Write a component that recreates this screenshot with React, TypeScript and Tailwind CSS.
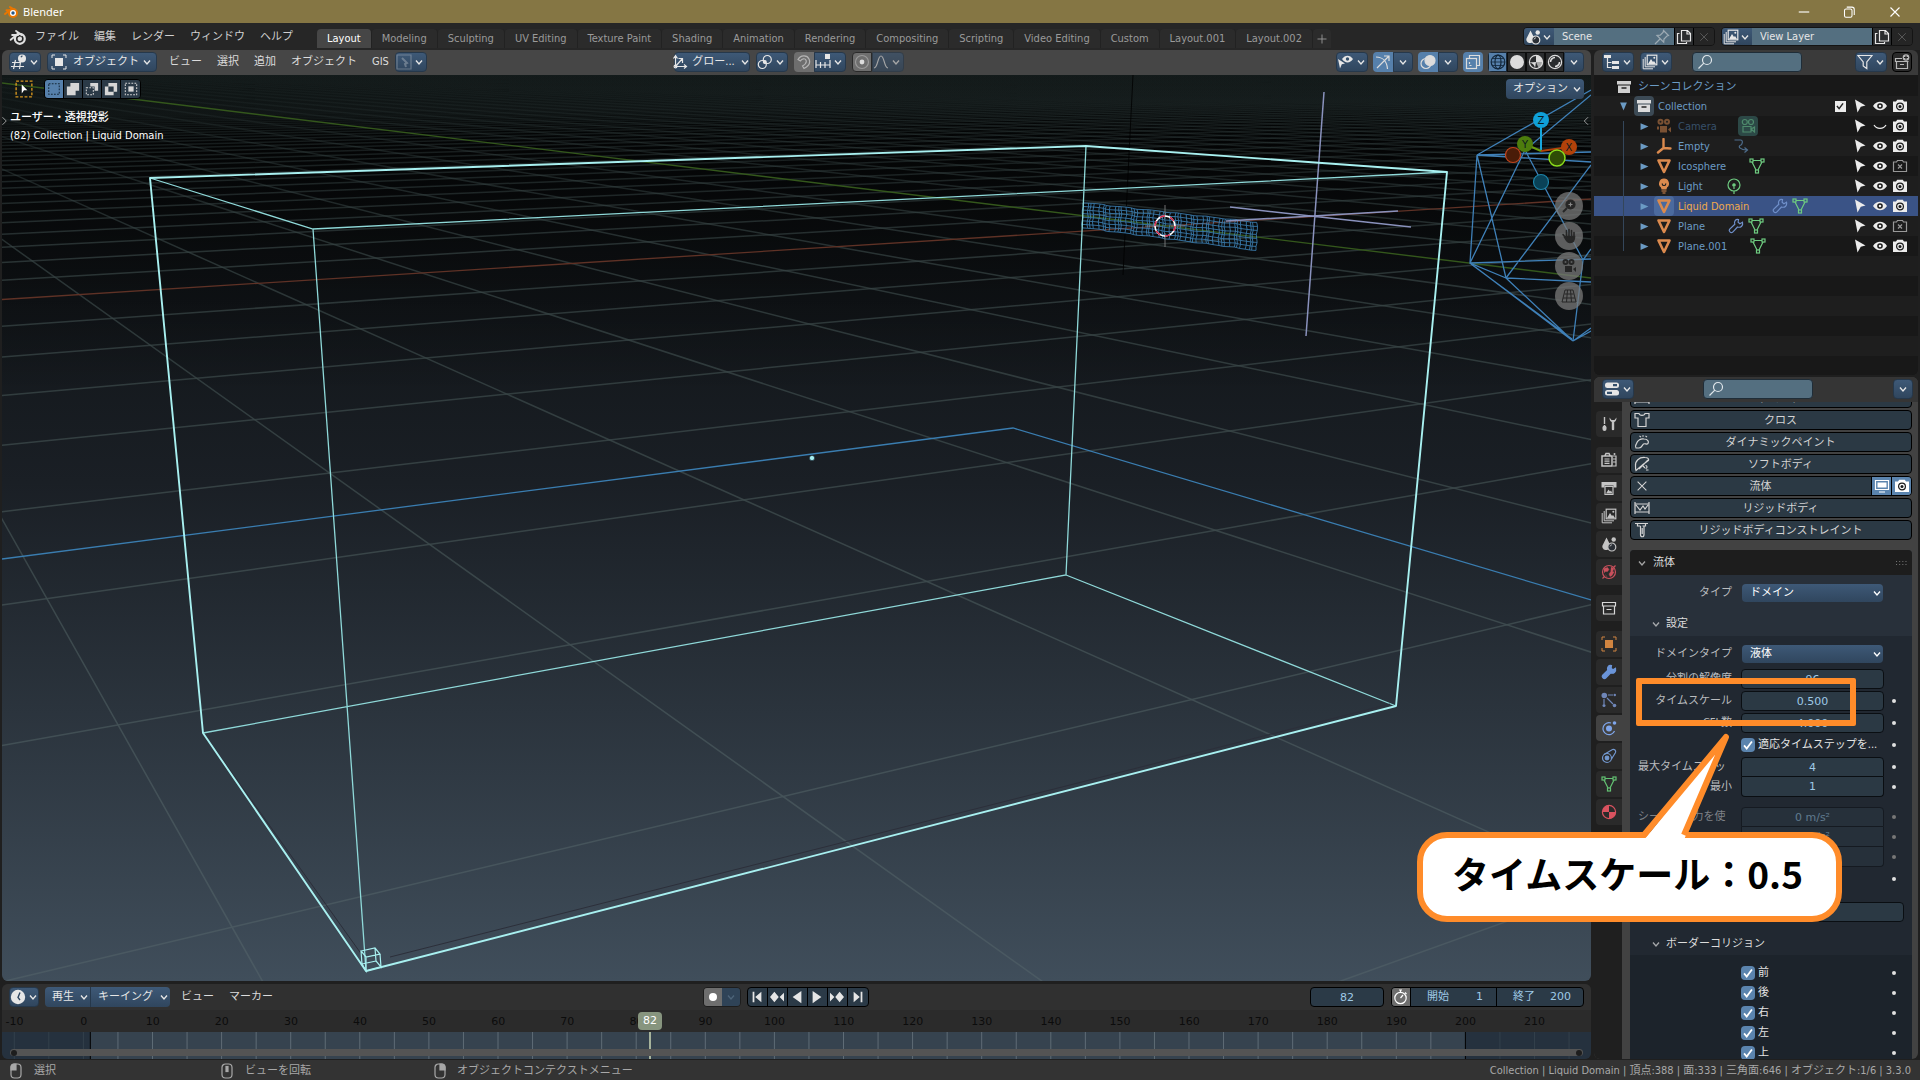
import type { ReactNode } from "react";
import clsx from "clsx";

/* ---------- icons ---------- */

type IconProps = { children: ReactNode; className?: string };

function Icon({ children, className }: IconProps) {
  return (
    <svg
      viewBox="0 0 16 16"
      fill="none"
      stroke="currentColor"
      strokeWidth="1.2"
      className={clsx("shrink-0", className ?? "size-4")}
      aria-hidden="true"
    >
      {children}
    </svg>
  );
}

const Chevron = ({ className }: { className?: string }) => (
  <Icon className={className ?? "size-3"}>
    <path d="M4 6l4 4.5L12 6" strokeWidth="1.8" />
  </Icon>
);

const BlenderLogo = ({ className }: { className?: string }) => (
  <Icon className={className}>
    <path d="M1.5 10.5L8.5 4.6M2.8 6.2H8M6.3 2.6l5.2 3.8" strokeWidth="1.7" strokeLinecap="round" />
    <circle cx="9.6" cy="9.6" r="4.4" strokeWidth="2" />
    <circle cx="9.6" cy="9.6" r="1.4" fill="currentColor" />
  </Icon>
);

const Viewport3DIcon = () => (
  <Icon>
    <path d="M1 8.5h8M0 12.5h13M4.5 6L2.5 15M9.5 8L8.5 15" />
    <circle cx="11" cy="4.6" r="4" fill="currentColor" stroke="none" />
    <path d="M10 3.2a1.5 1.5 0 011.5-1" stroke="#35506c" />
  </Icon>
);

const ObjectModeIcon = () => (
  <Icon>
    <path d="M1 4V1h3M12 1h3v3M15 12v3h-3M4 15H1v-3" strokeWidth="1" />
    <rect x="4" y="4" width="8" height="8" fill="currentColor" stroke="none" />
  </Icon>
);

const AxesIcon = () => (
  <Icon>
    <path d="M3.5 2v10.5H14M3.5 12.5L10 5M1.5 4.5l2-3 2 3M12 10.5l2.5 2-2.5 2M6.5 4.5H10.5V9" />
    <circle cx="3.5" cy="12.5" r="1.4" />
  </Icon>
);

const PivotIcon = () => (
  <Icon>
    <circle cx="5.3" cy="10.5" r="4" />
    <circle cx="10.3" cy="5.5" r="4" />
    <circle cx="7.8" cy="8" r="1.4" fill="currentColor" />
  </Icon>
);

const MagnetIcon = () => (
  <Icon>
    <path d="M2 5.5C4.5 1 11 .5 13 5s0 7-5 9.5l-1.5-2.5C10 10 11 8.5 10 6.2S6 4.5 4.4 7z" />
  </Icon>
);

const IncrementIcon = () => (
  <Icon>
    <path d="M1 6v8M5.5 8v6M10 8v6M15 6v8M1 11h14" />
    <rect x="10" y="0" width="5" height="5" fill="currentColor" stroke="none" />
  </Icon>
);

const FalloffIcon = () => (
  <Icon>
    <path d="M1 14c4 0 3.5-12 7-12s3 12 7 12" />
  </Icon>
);

const CircleDotIcon = () => (
  <Icon>
    <circle cx="8" cy="8" r="6.5" opacity=".4" />
    <circle cx="8" cy="8" r="2.4" fill="currentColor" stroke="none" />
  </Icon>
);

const EyeIcon = () => (
  <Icon>
    <path d="M1 8c3.5-5.6 10.500-5.600 14 0-3.500 5.600-10.500 5.600-14 0z" fill="currentColor" stroke="none" />
    <circle cx="8" cy="8" r="2.8" fill="#1b1b1b" stroke="none" />
    <circle cx="8" cy="8" r="1.3" fill="currentColor" stroke="none" />
  </Icon>
);

const ClosedEyeIcon = () => (
  <Icon>
    <path d="M2 7c2.500 4.500 9.500 4.500 12 0" />
  </Icon>
);

const CursorIcon = () => (
  <Icon>
    <path d="M3 1.500l10.500 6-4.700 1.200L5.500 14.500z" fill="currentColor" stroke="none" />
  </Icon>
);

const CameraIcon = ({ off }: { off?: boolean }) =>
  off ? (
    <Icon className="size-4 opacity-60">
      <path d="M1.500 4h3l1-1.500h5l1 1.500h3v9.500h-13z" />
      <path d="M6 6.500l4 4M10 6.500l-4 4" />
    </Icon>
  ) : (
    <Icon>
      <path d="M1 3.500h3l1.200-1.700h5.600L12 3.500h3V14H1z" fill="currentColor" stroke="none" />
      <circle cx="8" cy="8.500" r="3.400" stroke="#1b1b1b" />
      <circle cx="8" cy="8.500" r="1.500" fill="#1b1b1b" stroke="none" />
    </Icon>
  );

const ViewVisibilityIcon = () => (
  <Icon>
    <path d="M4 5c3-4.500 8-4.500 11 0-3 4.500-8 4.500-11 0z" fill="currentColor" stroke="none" />
    <circle cx="9.500" cy="5" r="1.700" fill="#35506c" stroke="none" />
    <path d="M0 5l7 4.500-3.200.800L2 14.500z" fill="currentColor" stroke="none" />
  </Icon>
);

const GizmoIcon = () => (
  <Icon>
    <path d="M1 3c7 0 11 5 11.500 12M2 14L13.500 2.500M9 2h5v5" />
  </Icon>
);

const OverlayIcon = () => (
  <Icon>
    <circle cx="10" cy="6.500" r="5" fill="currentColor" />
    <circle cx="6" cy="9.500" r="5" />
  </Icon>
);

const XrayIcon = () => (
  <Icon>
    <path d="M4.500 4.500V1.500h10v10h-3" />
    <rect x="1.500" y="4.500" width="10" height="10" />
    <path d="M4.500 8v3.500H8" strokeDasharray="2 1.500" />
  </Icon>
);

const WireSphereIcon = () => (
  <Icon>
    <circle cx="8" cy="8" r="6.800" />
    <ellipse cx="8" cy="8" rx="3" ry="6.800" />
    <path d="M1.200 8h13.600M2.500 4.500h11M2.500 11.500h11" strokeWidth=".8" />
  </Icon>
);

const SolidSphereIcon = () => (
  <Icon>
    <circle cx="8" cy="8" r="7" fill="currentColor" stroke="none" />
  </Icon>
);

const MaterialSphereIcon = () => (
  <Icon>
    <circle cx="8" cy="8" r="6.600" />
    <path d="M8 1.400A6.600 6.600 0 0114.600 8H8zM8 8l-1 6.500A6.600 6.600 0 001.400 8.500z" fill="currentColor" stroke="none" />
    <path d="M8 8h6.600a6.600 6.600 0 01-4 6z" fill="currentColor" stroke="none" opacity=".7" />
  </Icon>
);

const RenderSphereIcon = () => (
  <Icon>
    <circle cx="8" cy="8" r="6.600" />
    <path d="M3.500 8A4.500 4.500 0 018 3.500M12.500 8A4.500 4.500 0 018 12.500" strokeWidth="1.600" />
  </Icon>
);

const SceneIcon = () => (
  <Icon>
    <path d="M5.500 1.500L9 8.500a3.800 3.800 0 01-3 5.500H4.500A3.500 3.500 0 012 8.500z" fill="currentColor" stroke="none" />
    <circle cx="12.700" cy="3.500" r="2.200" fill="currentColor" stroke="none" />
    <circle cx="10.800" cy="11" r="4" fill="#2a2f36" />
    <path d="M9 10.500a2 2 0 012-1.700" strokeWidth=".8" />
  </Icon>
);

const LayersIcon = () => (
  <Icon>
    <path d="M1.200 5v9.800h9.800M3.200 3v9.800H13" strokeWidth="1" />
    <rect x="5.200" y="1.200" width="9.600" height="9.600" />
    <path d="M6 10l3-5 2 3 1-1 2 3z" fill="currentColor" stroke="none" />
    <circle cx="12.300" cy="3.800" r="1" fill="currentColor" stroke="none" />
  </Icon>
);

const CopyIcon = () => (
  <Icon>
    <path d="M5.500 1.500h6l3 3v7.500h-9zM11 1.500v3.500h3.500M3.500 4.500h-2v10h9v-1.500" />
  </Icon>
);

const CloseIcon = ({ className }: { className?: string }) => (
  <Icon className={className}>
    <path d="M3 3l10 10M13 3L3 13" />
  </Icon>
);

const PinIcon = () => (
  <Icon>
    <path d="M9.500 1.500l5 5-1.500.5-3 3-.3 3.200L3 6.500l3.200-.3 3-3zM6 10l-5 5" />
  </Icon>
);

const SearchIcon = () => (
  <Icon>
    <circle cx="10" cy="6" r="4.500" />
    <path d="M6.800 9.200L1.500 14.500" />
  </Icon>
);

const OutlinerIcon = () => (
  <Icon>
    <rect x="0" y="1" width="7" height="3" fill="currentColor" stroke="none" />
    <path d="M3.500 4v9.500h4M3.500 8.500h4" />
    <rect x="8" y="7" width="7" height="3" fill="currentColor" stroke="none" />
    <rect x="8" y="12" width="7" height="3" fill="currentColor" stroke="none" />
  </Icon>
);

const FilterIcon = () => (
  <Icon>
    <path d="M1 1.500h14L9.800 8v6.500L6.200 12V8z" />
  </Icon>
);

const NewCollectionIcon = () => (
  <Icon>
    <path d="M8 4.500H1.500v3h13M2.500 7.500v7h11v-7M6 10.500h4" />
    <circle cx="12" cy="3.500" r="3.300" fill="currentColor" stroke="none" />
    <path d="M12 1.500v4M10 3.500h4" stroke="#222" />
  </Icon>
);

const CollectionIcon = () => (
  <Icon>
    <rect x="1" y="2" width="14" height="3.500" fill="currentColor" stroke="none" />
    <path d="M2 6.500h12V14H2z" fill="currentColor" stroke="none" />
    <path d="M5.500 9h5" stroke="#222" strokeWidth="1.600" />
  </Icon>
);

const ArchiveIcon = () => (
  <Icon>
    <path d="M1.500 2.500h13v3.500h-13zM2.500 6v8h11V6M5.500 9.500h5" />
  </Icon>
);

const MovieIcon = () => (
  <Icon>
    <circle cx="4.500" cy="3.800" r="3" fill="currentColor" stroke="none" />
    <circle cx="11" cy="3.800" r="3" fill="currentColor" stroke="none" />
    <circle cx="4.500" cy="3.800" r="1" fill="#222" stroke="none" />
    <circle cx="11" cy="3.800" r="1" fill="#222" stroke="none" />
    <path d="M4 8h7v6.500H4zM12 11.500l3-2.500v5.500zM1 8.500h2v3H1z" fill="currentColor" stroke="none" />
  </Icon>
);

const CameraDataIcon = () => (
  <Icon>
    <circle cx="4.800" cy="4" r="2.500" />
    <circle cx="11" cy="4" r="2.500" />
    <path d="M3 8.500h8v5.500H3zM11 11l3.500-2v5z" />
  </Icon>
);

const EmptyIcon = () => (
  <Icon>
    <path d="M7.500 1v9M7.500 10l7 .500M7.500 10L2 14.500" strokeWidth="2.400" strokeLinecap="round" />
  </Icon>
);

const CurveIcon = () => (
  <Icon>
    <path d="M1.500 2h6c3 0 2 5-.500 5.500-2 1 0 4.500 7 4.500M11.500 9.500l3 2.500-3 2.500" />
  </Icon>
);

const MeshObjectIcon = () => (
  <Icon>
    <path d="M2.500 2.500h11L8 14z" strokeWidth="2.600" strokeLinejoin="round" />
  </Icon>
);

const MeshDataIcon = () => (
  <Icon>
    <path d="M4 2.500h8M3 4l4 8M13 4L9 12" />
    <rect x="1" y="1" width="3" height="3" />
    <rect x="12" y="1" width="3" height="3" />
    <rect x="6.500" y="12" width="3" height="3" />
  </Icon>
);

const BulbIcon = () => (
  <Icon>
    <path d="M8 .500a5 5 0 00-3 9l.500 2h5l.500-2a5 5 0 00-3-9z" fill="currentColor" stroke="none" />
    <path d="M5.500 13h5M6.500 15h3" />
    <path d="M6 5.500l1 2h2l1-2" stroke="#222" />
  </Icon>
);

const LightDataIcon = () => (
  <Icon>
    <circle cx="8" cy="7" r="6" />
    <circle cx="8" cy="7" r="1.200" fill="currentColor" />
    <path d="M8 9v2M8 13v3" />
  </Icon>
);

const WrenchIcon = ({ solid }: { solid?: boolean }) => (
  <Icon>
    <path
      d="M14.500 4.200l-2.600 1.500-1.800-1.500.4-2.700C7.500.800 5.800 3.500 6.800 6.300l-5.300 5c-1 1.800 1.200 4 3 3l5-5.300c3.500 1 5.800-1.500 5-4.800z"
      fill={solid ? "currentColor" : "none"}
    />
  </Icon>
);

const PropertiesIcon = () => (
  <Icon>
    <rect x="1" y="1.500" width="14" height="5.500" rx="2.500" fill="currentColor" stroke="none" />
    <rect x="1" y="9" width="14" height="5.500" rx="2.500" fill="currentColor" stroke="none" />
    <path d="M9 4.200h4M3 11.800h5" stroke="#35506c" strokeWidth="2.200" />
  </Icon>
);

const ToolIcon = () => (
  <Icon>
    <path d="M3.500 1v7M3.500 9v2" strokeWidth="1.400" />
    <rect x="1.500" y="9.500" width="4" height="5.500" rx="2" fill="currentColor" stroke="none" />
    <path d="M8.500 1.500c0 3 1 4 2.300 4.500v7.500a1.300 1.300 0 002.400 0V6c1.500-.500 2.300-2 2.300-4.500l-2 2.500h-3z" fill="currentColor" stroke="none" />
  </Icon>
);

const RenderIcon = () => (
  <Icon>
    <path d="M1 4h10v10H1zM4 3.500L5 1.500h3l1 2" strokeWidth="1.500" />
    <path d="M3.500 7h5M3.500 9.200h5M3.500 11.400h5M12 4h3v10h-3M12 7h3M12 10h3" />
    <circle cx="13.500" cy="2" r="1" fill="currentColor" stroke="none" />
  </Icon>
);

const OutputIcon = () => (
  <Icon>
    <path d="M.500 2h15v5.500h-3V5.500h-9v2h-3z" fill="currentColor" stroke="none" />
    <path d="M4 6.500h8v8H4z" />
    <path d="M5 13.500l2.500-4 1.500 2 1-1 1.500 3z" fill="currentColor" stroke="none" />
  </Icon>
);

const WorldIcon = () => (
  <Icon>
    <circle cx="8" cy="8" r="6.500" />
    <path d="M3 4.500l3.500-1 1.500 2-1.500 2H4l-1 1.500M10 3l3 1.500-1.500 3 1.500.5-2 3.500-2 1-1-2.500 1.500-2M4.500 10.500l1.500 2.500" fill="currentColor" strokeWidth=".4" />
    <path d="M14.500 1.500l-2 2M3.500 12.500l-2 2" />
  </Icon>
);

const ParticlesIcon = () => (
  <Icon>
    <circle cx="3.300" cy="3.500" r="2.800" fill="currentColor" stroke="none" />
    <circle cx="3" cy="13.500" r="1.500" fill="currentColor" stroke="none" />
    <circle cx="13.500" cy="13.500" r="1.800" fill="currentColor" stroke="none" />
    <circle cx="13.800" cy="3" r="1.200" fill="currentColor" stroke="none" />
    <path d="M7 3h5M3 7v5M6 6l6 6" />
  </Icon>
);

const PhysicsIcon = () => (
  <Icon>
    <circle cx="8" cy="8.500" r="3" fill="currentColor" stroke="none" />
    <path d="M10 3a6 6 0 10 3.500 8" />
    <circle cx="13.500" cy="3" r="1.800" fill="currentColor" stroke="none" />
  </Icon>
);

const ConstraintIcon = () => (
  <Icon>
    <circle cx="6" cy="10" r="4.500" />
    <circle cx="6" cy="10" r="1.800" fill="currentColor" />
    <path d="M3 6.500l8.500-5a2.300 2.300 0 013 3L10.500 11" />
  </Icon>
);

const MaterialIcon = () => (
  <Icon>
    <circle cx="8" cy="8" r="6.600" />
    <path d="M8 8V1.400A6.600 6.600 0 001.400 8zM8 8v6.600A6.600 6.600 0 0014.600 8z" fill="currentColor" stroke="none" />
  </Icon>
);

const ShirtIcon = () => (
  <Icon>
    <path d="M1 1.500h4c.500 2.500 5.500 2.500 6 0h4v4.500h-3v8.500H4V6H1z" />
  </Icon>
);

const PaintIcon = () => (
  <Icon>
    <path d="M2 14c-1.500-2 0-3 .500-4.500C3.500 6 7 4.500 10 5c4 0 5 3 4 4.500-1.500 1.500-3-.500-4.500.500S8 14 5 14z" />
    <path d="M6 3l.500-1M9 2.500v-1M12 3l.500-1" strokeWidth="1.800" />
  </Icon>
);

const SoftBodyIcon = () => (
  <Icon>
    <path d="M1.500 10C1 5 5 1 11 1.500c3 0 4 1.500 3.500 3L9 8.500l-7 6c-.500-1-.500-3-.500-4.500zM5 13l9-9M9 10l2 2M11.500 9.500c2 0 2 3 0 3M12 14h2.500" />
  </Icon>
);

const RigidIcon = () => (
  <Icon>
    <path d="M1 2v12M15 2v12M1 4h14M1 12h14M2 5l4 5 3-4 2 3 3-4" />
  </Icon>
);

const RigidConstraintIcon = () => (
  <Icon>
    <path d="M1 1.500h13M3.500 1.500v2.500h3M11.500 1.500v2.500h-3M6.500 4v8.500c0 3 3.500 3 3.500 0V4M8.200 6v6" />
  </Icon>
);

const MonitorIcon = () => (
  <Icon>
    <path d="M1.500 2.500h13v9h-13zM5 14h6" />
    <rect x="3.500" y="4.500" width="9" height="5" fill="currentColor" stroke="none" />
  </Icon>
);

const ClockIcon = () => (
  <Icon>
    <circle cx="8" cy="8" r="7.200" fill="currentColor" stroke="none" />
    <path d="M10 3.500L8 8.500l2 2.500" stroke="#2f4660" strokeWidth="1.400" />
  </Icon>
);

const StopwatchIcon = () => (
  <Icon>
    <circle cx="7.500" cy="9" r="5.700" />
    <path d="M7.500 9l2.500-3M6 1h3M7.500 1v2.500M12 3.500l1.500 1.500" />
  </Icon>
);

const MouseIcon = ({ side }: { side: "left" | "middle" | "right" }) => (
  <Icon>
    <rect x="3" y="1" width="10" height="14" rx="3.500" />
    {side === "left" && <path d="M3 7V4a3 3 0 013-3h2v6z" fill="currentColor" />}
    {side === "right" && <path d="M13 7V4a3 3 0 00-3-3H8v6z" fill="currentColor" />}
    {side === "middle" && <rect x="7" y="3.500" width="2" height="5" fill="currentColor" />}
  </Icon>
);

/* ---------- shared widgets ---------- */

const blue = "bg-linear-to-b from-[#3e5977] to-[#30465e] text-[#e6e6e6]";

function DropButton({ label, children, className }: { label: string; children?: ReactNode; className?: string }) {
  return (
    <button
      aria-label={label}
      className={clsx("flex h-5 items-center justify-center gap-px rounded-sm border border-[#26384b]", blue, className)}
    >
      {children}
      <Chevron />
    </button>
  );
}

function SearchField({ label, className }: { label: string; className?: string }) {
  return (
    <div className={clsx("flex h-5 items-center rounded-sm border border-[#1f2d38] bg-[#546f80] px-1 text-[#dfe6ea]", className)}>
      <SearchIcon />
      <input aria-label={label} className="min-w-0 flex-1 bg-transparent outline-none" />
    </div>
  );
}

function DataBlock({ icon, name, pinned }: { icon: ReactNode; name: string; pinned?: boolean }) {
  return (
    <div className="flex h-[19px] overflow-hidden rounded-sm border border-[#141414] text-[#e6e6e6]">
      <button aria-label={`${name} list`} className={clsx("flex w-[30px] items-center justify-center", blue)}>
        {icon}
        <Chevron />
      </button>
      <div className="flex w-30 items-center bg-[#546f80] pr-1 pl-2">
        <input aria-label={name} defaultValue={name} className="min-w-0 flex-1 bg-transparent outline-none" />
        {pinned && <span className="opacity-50"><PinIcon /></span>}
      </div>
      <button aria-label="Copy" className="flex w-5 items-center justify-center border-x border-black bg-[#2a2c2e]"><CopyIcon /></button>
      <button aria-label="Remove" className="flex w-5 items-center justify-center bg-[#252525] text-[#5c5c5c]"><CloseIcon className="size-3" /></button>
    </div>
  );
}

/* ---------- top bars ---------- */

const menus = ["ファイル", "編集", "レンダー", "ウィンドウ", "ヘルプ"];

const workspaces = [
  "Layout", "Modeling", "Sculpting", "UV Editing", "Texture Paint", "Shading", "Animation", "Rendering",
  "Compositing", "Scripting", "Video Editing", "Custom", "Layout.001", "Layout.002",
];

function TitleBar() {
  return (
    <header className="flex h-[23px] shrink-0 items-center bg-[#857644] pr-[2px] pl-1 text-white">
      <svg viewBox="0 0 16 16" className="size-4" aria-hidden="true">
        <path d="M1 10L8 4.500M2.500 6.200H8M6 3l5 3" stroke="#ea7600" strokeWidth="2" fill="none" strokeLinecap="round" />
        <circle cx="9" cy="9" r="4" fill="#fff" stroke="#ea7600" strokeWidth="2" />
        <circle cx="9" cy="9" r="1.700" fill="#265787" />
      </svg>
      <span className="ml-[3px] font-['Noto_Sans',sans-serif]">Blender</span>
      <div className="ml-auto flex">
        <button aria-label="Minimize" className="flex w-[45px] justify-center">
          <Icon className="size-3"><path d="M1 8h14" strokeWidth="1.500" /></Icon>
        </button>
        <button aria-label="Restore" className="flex w-[45px] justify-center">
          <Icon className="size-3"><rect x="2" y="4" width="10" height="11" rx="2" strokeWidth="1.400" /><path d="M5 1.500h7a3 3 0 013 3V12" strokeWidth="1.400" /></Icon>
        </button>
        <button aria-label="Close" className="flex w-[47px] justify-center">
          <Icon className="size-3"><path d="M2 2l12 12M14 2L2 14" strokeWidth="1.500" /></Icon>
        </button>
      </div>
    </header>
  );
}

function TopBar() {
  return (
    <nav className="flex h-[27px] shrink-0 items-center bg-[#262626] pl-[9px] pr-[7px] text-[#cfcfcf]">
      <BlenderLogo className="size-[18px] text-[#e0e0e0]" />
      <div className="flex gap-[15px] pl-2">
        {menus.map((menu) => (
          <button key={menu}>{menu}</button>
        ))}
      </div>
      <div className="ml-6 flex h-full items-end pb-[2px]">
        {workspaces.map((tab, i) => (
          <button
            key={tab}
            className={clsx(
              "h-[19px] rounded-t-sm border-r border-[#222222] px-[10px] pt-px",
              i === 0 ? "bg-[#464646] text-white" : "bg-[#2b2b2b] text-[#9a9a9a]",
            )}
          >
            {tab}
          </button>
        ))}
        <button aria-label="Add workspace" className="flex h-[19px] w-[18px] items-center justify-center rounded-t-sm bg-[#2b2b2b] text-[#9a9a9a]">
          <Icon className="size-3"><path d="M8 2v12M2 8h12" /></Icon>
        </button>
      </div>
      <div className="ml-auto flex gap-[6px]">
        <DataBlock icon={<SceneIcon />} name="Scene" pinned />
        <DataBlock icon={<LayersIcon />} name="View Layer" />
      </div>
    </nav>
  );
}

/* ---------- 3D viewport ---------- */

// Projects a floor grid coordinate to the viewport.
function project(i: number, j: number) {
  const w = 1 + 0.03507 * i - 0.0604 * j;
  return [(1165 + 138.3 * i + 15.8 * j) / w, (226 + 1.63 * i - 3.1 * j) / w];
}

const range = (from: number, to: number) => Array.from({ length: to - from + 1 }, (_, n) => from + n);

function linePath(a: number[], b: number[]) {
  return `M${a[0].toFixed(1)} ${a[1].toFixed(1)}L${b[0].toFixed(1)} ${b[1].toFixed(1)}`;
}

const rowLine = (j: number) => linePath(project((0.0604 * j - 1) / 0.03507 + 1, j), project(4000, j));
const columnLine = (i: number) => linePath(project(i, (1 + 0.03507 * i) / 0.0604 - 0.6), project(i, -4000));

const floorRows = range(-90, 9).filter((j) => j !== 0).map(rowLine).join("");
const floorColumns = range(-16, 70).filter((i) => i !== 0).map(columnLine).join("");

function meshStrip() {
  const columns = 44;
  const rows = 7;
  const at = (c: number, r: number) => {
    const u = c / columns;
    const v = r / rows;
    const wobble = Math.sin(c * 1.7) * 1.3 + Math.sin(r * 1.9 + c * 0.4) * 0.6;
    return [1083 + 175 * u - v + wobble, 202.5 + 20 * u + v * (25 + 3 * u) + Math.cos(c * 0.9) * 0.4];
  };
  const toLine = (points: number[][]) => `M${points.map((p) => `${p[0].toFixed(1)} ${p[1].toFixed(1)}`).join("L")}`;
  const across = range(0, rows).map((r) => toLine(range(0, columns).map((c) => at(c, r))));
  const down = range(0, columns).map((c) => toLine(range(0, rows).map((r) => at(c, r))));
  return [...across, ...down].join("");
}

function Scene() {
  return (
    <svg viewBox="2 75 1589 906" preserveAspectRatio="xMinYMin slice" fill="none" className="absolute inset-0 h-full w-full" aria-hidden="true">
      <defs>
        <linearGradient id="fade" x1="0" y1="75" x2="0" y2="981" gradientUnits="userSpaceOnUse">
          <stop offset="0" stopColor="#2c3838" stopOpacity=".08" />
          <stop offset=".08" stopColor="#344242" stopOpacity=".4" />
          <stop offset=".2" stopColor="#364343" stopOpacity=".7" />
          <stop offset=".5" stopColor="#3c494b" stopOpacity=".85" />
          <stop offset="1" stopColor="#4b5a63" />
        </linearGradient>
      </defs>
      <path d={floorRows} stroke="url(#fade)" strokeWidth="1.500" />
      <path d={floorColumns} stroke="url(#fade)" strokeWidth="1.500" />
      <path d="M2 299.500L1591 199" stroke="#5f3226" strokeWidth="1.300" />
      <path d="M2 83L1591 278" stroke="#34571c" strokeWidth="1.400" />
      <path d="M1133 75L1123 275" stroke="#000" strokeWidth=".8" />

      <path d="M2 559L1013 428L1591 600" stroke="#3a7db0" strokeWidth="1.300" />
      <path d={meshStrip()} stroke="#3f86bd" strokeWidth=".8" />

      <g stroke="#3f80b8" strokeWidth="1.300">
        <path d="M1591 90L1477 155L1591 152M1477 155L1591 162M1477 155L1470 263L1506 278L1477 155M1525 150L1470 263M1525 150L1591 95M1525 150L1583 260L1573 341M1583 260L1591 249" />
        <path d="M1470 263L1591 259M1506 278L1591 282M1506 278L1591 165M1470 263L1573 341L1506 278M1573 341L1591 328M1573 341L1591 331M1471 264L1572 339" />
      </g>

      <path d="M1324 92L1306 336M1230 207L1411 227M1226 221L1398 211" stroke="#8a92bd" strokeWidth="1.500" />

      <path d="M150 178L313 229L1447 172M313 229L366 971M1086 146L1066 575L203 733M1066 575L1396 706" stroke="#8fd9d9" strokeWidth="1.300" />
      <path d="M390 957L1390 704M210 742L362 955" stroke="#2c2f3a" />
      <path d="M150 178L1086 146L1447 172L1396 706L366 971L203 733Z" stroke="#a8f0f0" strokeWidth="1.900" strokeLinejoin="round" />
      <path d="M361 951L375 948L380 954L366 957ZM361 951L362 964L366 971L366 957M375 948L376 961L381 967L380 954M362 964L376 961M366 971L381 967" stroke="#a8f0f0" strokeWidth="1.200" />

      <circle cx="812" cy="458" r="2.600" fill="#a8f0f0" stroke="#123" strokeWidth=".6" />
      <path d="M1165 205v14M1165 233v14M1145 226h14M1171 226h14" stroke="#8c8c8c" strokeWidth=".8" />
      <circle cx="1165" cy="226" r="10" stroke="#fff" strokeWidth="1.500" />
      <circle cx="1165" cy="226" r="10" stroke="#d1264a" strokeWidth="1.500" strokeDasharray="5.200 5.200" />
    </svg>
  );
}

function AxisGizmo() {
  return (
    <svg viewBox="1504 108 75 84" fill="none" className="absolute top-[33px] right-3 h-[84px] w-[75px]" aria-label="Navigation axes">
      <circle cx="1541" cy="182" r="7.500" fill="#0a4257" stroke="#1d84a8" strokeWidth="1.200" />
      <path d="M1541 151V120" stroke="#17a7dd" strokeWidth="2" />
      <path d="M1541 151L1569 147" stroke="#b2420a" strokeWidth="2" />
      <path d="M1541 151L1525 144" stroke="#6a9c10" strokeWidth="2" />
      <circle cx="1525" cy="144" r="8" fill="#4d7d0d" />
      <circle cx="1569" cy="147" r="8" fill="#b2420a" />
      <circle cx="1513" cy="155" r="7.500" fill="#4a1c08" stroke="#c0441c" strokeWidth="1.200" />
      <circle cx="1557" cy="158" r="8" fill="#2f4c06" stroke="#8bdc1c" strokeWidth="1.500" />
      <circle cx="1541" cy="120" r="8" fill="#10a0d8" />
      <g fontFamily="DejaVu Sans, sans-serif" fontSize="10" textAnchor="middle" fill="#0b1a20">
        <text x="1541" y="124">Z</text>
        <text x="1525" y="148">Y</text>
        <text x="1569" y="151">X</text>
      </g>
    </svg>
  );
}

const selectModes = [
  <rect key="set" x="2" y="2" width="12" height="12" strokeDasharray="2 1.500" stroke="#16283a" />,
  <path key="add" d="M5 1h10v9h-4v5H1V5h4z" fill="currentColor" stroke="none" />,
  <g key="sub"><path d="M6 1h9v9h-4V5H6z" fill="currentColor" stroke="none" /><rect x="1.500" y="6.500" width="8" height="8" strokeDasharray="2 1.500" /></g>,
  <path key="diff" fillRule="evenodd" d="M5 1h10v10h-4v4H1V5h4zM5 5v6h6V5z" fill="currentColor" stroke="none" />,
  <g key="and"><rect x="1.500" y="1.500" width="13" height="13" strokeDasharray="2 1.500" /><rect x="5" y="5" width="6" height="6" fill="currentColor" stroke="none" /></g>,
];

function ViewportHeader() {
  const shading = [WireSphereIcon, SolidSphereIcon, MaterialSphereIcon, RenderSphereIcon];
  return (
    <div className="flex h-[25px] shrink-0 items-center justify-between rounded-t-md bg-[#464646] px-[7px] pb-px text-[#dcdcdc]">
      <div className="flex flex-1 items-center">
        <DropButton label="Editor type" className="w-8"><Viewport3DIcon /></DropButton>
        <div className={clsx("relative ml-[6px] flex h-5 w-[110px] items-center rounded-sm border border-[#26384b] px-[3px]", blue)}>
          <ObjectModeIcon />
          <select aria-label="Mode" className="absolute inset-0 appearance-none pl-[25px] outline-none">
            <option>オブジェクト</option>
          </select>
          <Chevron className="ml-auto size-3" />
        </div>
        <div className="flex gap-[15px] pl-3">
          <button>ビュー</button>
          <button>選択</button>
          <button>追加</button>
          <button>オブジェクト</button>
          <button>GIS</button>
        </div>
        <DropButton label="GIS tools" className="ml-[6px] w-8">
          <span className="opacity-30"><Icon><path d="M1 1h14v14H1z" /><path d="M6 4l5 5-2 1 1 3" strokeWidth="2" /></Icon></span>
        </DropButton>
      </div>
      <div className="mr-4 flex gap-[6px]">
        <DropButton label="Transform orientation" className="w-[76px]">
          <AxesIcon />
          <span className="px-[3px]">グロー...</span>
        </DropButton>
        <DropButton label="Pivot point" className="w-8"><PivotIcon /></DropButton>
        <div className="flex">
          <button aria-label="Snap" className="flex h-5 w-5 items-center justify-center rounded-l-sm bg-[#6e6e6e] text-[#b4b4b4]"><MagnetIcon /></button>
          <DropButton label="Snap to" className="w-8 rounded-l-none"><IncrementIcon /></DropButton>
        </div>
        <div className="flex">
          <button aria-label="Proportional editing" className="flex h-5 w-5 items-center justify-center rounded-l-sm border border-[#2a2a2a] bg-[#6e6e6e]"><CircleDotIcon /></button>
          <DropButton label="Falloff" className="w-8 rounded-l-none opacity-60"><FalloffIcon /></DropButton>
        </div>
      </div>
      <div className="flex flex-1 justify-end gap-[5px]">
        <DropButton label="Object visibility" className="w-8"><ViewVisibilityIcon /></DropButton>
        <div className="flex">
          <button aria-label="Gizmos" className="flex h-5 w-5 items-center justify-center rounded-l-sm bg-[#5680ab]"><GizmoIcon /></button>
          <DropButton label="Gizmo options" className="w-5 rounded-l-none" />
        </div>
        <div className="flex">
          <button aria-label="Overlays" className="flex h-5 w-5 items-center justify-center rounded-l-sm bg-[#5680ab]"><OverlayIcon /></button>
          <DropButton label="Overlay options" className="w-5 rounded-l-none" />
        </div>
        <button aria-label="X-ray" className="flex h-5 w-5 items-center justify-center rounded-sm bg-[#5680ab]"><XrayIcon /></button>
        <div className="flex overflow-hidden rounded-sm">
          {shading.map((Shade, i) => (
            <button
              key={i}
              aria-label={`Shading ${i + 1}`}
              className={clsx("flex h-5 w-[19px] items-center justify-center border border-black/70", i === 0 ? "bg-[#5680ab] text-[#12263a]" : "bg-[#2a2c2e]")}
            >
              <Shade />
            </button>
          ))}
          <DropButton label="Shading options" className="w-5 rounded-l-none" />
        </div>
      </div>
    </div>
  );
}

function Viewport() {
  return (
    <section className="flex min-h-0 flex-1 flex-col">
      <ViewportHeader />
      <div className="relative flex-1 overflow-hidden rounded-b-md bg-linear-to-b from-[#090c0d] via-[#1a1f25] via-45% to-[#404e5b]">
        <div className="absolute inset-0 bg-linear-to-b from-[#0f1515] via-black/65 via-10% to-transparent to-35%" />
        <Scene />
        <div className="absolute top-1 left-[13px] flex items-center gap-[11px]">
          <button aria-label="Select box" className="text-[#d9981f]">
            <Icon className="size-[18px]">
              <rect x="1" y="1" width="14" height="14" strokeDasharray="2.500 1.500" />
              <path d="M6 4l5 5H8l-2 3z" fill="#fff" stroke="none" />
            </Icon>
          </button>
          <div className="flex overflow-hidden rounded-sm border border-black">
            {selectModes.map((shape, i) => (
              <button
                key={i}
                aria-label={`Select mode ${i + 1}`}
                className={clsx("flex h-[18px] w-[19px] items-center justify-center border-r border-black text-[#d6d6d6] last:border-r-0", i === 0 ? "bg-[#5680ab]" : "bg-[#2b3a47]")}
              >
                <Icon className="size-[14px]">{shape}</Icon>
              </button>
            ))}
          </div>
        </div>
        <div className="absolute top-[34px] left-2 leading-[18px] font-medium text-white">
          <p>ユーザー・透視投影</p>
          <p>(82) Collection | Liquid Domain</p>
        </div>
        <button className={clsx("absolute top-1 right-[7px] flex h-5 items-center gap-[3px] rounded-sm pr-px pl-[7px]", blue)}>
          オプション
          <Chevron />
        </button>
        <span className="absolute top-10 right-0 text-[#aaa]"><Icon className="size-3"><path d="M12 3L7 8l5 5" /></Icon></span>
        <span className="absolute top-10 -left-1 text-[#aaa]"><Icon className="size-3"><path d="M6 3l5 5-5 5" /></Icon></span>
        <AxisGizmo />
        <div className="absolute top-[117px] right-2 flex flex-col gap-[2px] text-[#262626]">
          <NavButton label="Zoom"><circle cx="9.500" cy="6.500" r="4.500" fill="currentColor" /><path d="M6 10l-4 4" strokeWidth="2" /><path d="M9.500 4.500v4M7.500 6.500h4" stroke="#888" /></NavButton>
          <NavButton label="Pan"><path d="M4 9L2 6.500M5.500 8V2.500M8 7.500V1.500M10.500 8V2.500M13 9V4.500M4 8.500h9.500c0 4-1.500 6-4.500 6s-4-3-5.500-5.500z" fill="currentColor" strokeWidth="1.600" strokeLinecap="round" /></NavButton>
          <NavButton label="Camera view">
            <circle cx="4.500" cy="4" r="2" strokeWidth="2" /><circle cx="10.500" cy="4" r="2" strokeWidth="2" />
            <path d="M4 8h7v6H4zM12 11l3-2v5z" fill="currentColor" stroke="none" />
          </NavButton>
          <NavButton label="Orthographic"><path d="M4 2h8l3 12H1zM3.500 6h9M2 10h12M6.500 2L5.500 14M9.500 2l1 12" strokeWidth="1" /></NavButton>
        </div>
      </div>
    </section>
  );
}

function NavButton({ label, children }: { label: string; children: ReactNode }) {
  return (
    <button aria-label={label} className="flex size-7 items-center justify-center rounded-full bg-[#7a7a7a]/75">
      <Icon>{children}</Icon>
    </button>
  );
}

/* ---------- timeline ---------- */

const frameLeft = (frame: number) => `${((81.4 + 6.91 * frame) / 15.89).toFixed(3)}%`;

const transport = [
  { label: "Jump to start", d: "M3 2v12h2V2zM13 2v12L6 8z" },
  { label: "Previous keyframe", d: "M5 2l5 6-5 6-5-6zM16 3v10l-5-5z" },
  { label: "Play backwards", d: "M13 1v14L3 8z" },
  { label: "Play", d: "M3 1v14l10-7z" },
  { label: "Next keyframe", d: "M11 2l5 6-5 6-5-6zM0 3v10l5-5z" },
  { label: "Jump to end", d: "M11 2v12h2V2zM3 2v12l7-6z" },
];

function Timeline() {
  return (
    <section className="flex h-[75px] shrink-0 flex-col overflow-hidden rounded-md bg-[#2b2b2b]">
      <div className="flex h-[26px] items-center bg-[#303030] px-[7px] text-[#dcdcdc]">
        <div className="flex flex-1 items-center">
          <DropButton label="Editor type" className="w-[30px]"><ClockIcon /></DropButton>
          <button className={clsx("ml-[6px] flex h-5 items-center gap-1 rounded-l-sm border-r border-[#26384b] pl-[7px]", blue)}>再生<Chevron /></button>
          <button className={clsx("flex h-5 items-center gap-[5px] rounded-r-sm pl-[7px]", blue)}>キーイング<Chevron /></button>
          <button className="ml-[11px]">ビュー</button>
          <button className="ml-[15px]">マーカー</button>
        </div>
        <div className="mr-[22px] flex gap-[6px]">
          <div className="flex overflow-hidden rounded-sm border border-[#1d1d1d]">
            <button aria-label="Auto keying" className="flex h-[18px] w-[18px] items-center justify-center bg-[#6e6e6e]">
              <Icon><circle cx="8" cy="8" r="4" fill="#fff" stroke="none" /></Icon>
            </button>
            <button aria-label="Keying options" className="flex w-[18px] items-center justify-center bg-[#2f4357] text-[#4d6479]"><Chevron /></button>
          </div>
          <div className="flex overflow-hidden rounded-sm border border-black bg-[#2b3a47] text-[#e6e6e6]">
            {transport.map((item) => (
              <button key={item.label} aria-label={item.label} className="flex h-[18px] w-5 items-center justify-center border-r border-black last:border-r-0">
                <Icon className="size-[14px]"><path d={item.d} fill="currentColor" stroke="none" /></Icon>
              </button>
            ))}
          </div>
        </div>
        <div className="flex flex-1 justify-end gap-[7px] font-['DejaVu_Sans','Noto_Sans_CJK_JP',sans-serif] text-[#9fc9e6]">
          <input aria-label="Current frame" defaultValue="82" className="h-5 w-[74px] rounded-sm border border-black bg-[#2b3a47] text-center outline-none" />
          <div className="flex h-5 overflow-hidden rounded-sm border border-black bg-[#2b3a47]">
            <button aria-label="Use preview range" className="flex w-[18px] items-center justify-center bg-[#6e6e6e] text-white"><StopwatchIcon /></button>
            <label className="flex w-[87px] items-center border-x border-black pr-[13px] pl-4">
              開始<input defaultValue="1" className="w-full min-w-0 bg-transparent text-right outline-none" />
            </label>
            <label className="flex w-[86px] items-center pr-3 pl-4">
              終了<input defaultValue="200" className="w-full min-w-0 bg-transparent text-right outline-none" />
            </label>
          </div>
        </div>
      </div>
      <div className="relative flex flex-1 flex-col">
        <div className="mr-[22px] -ml-[22px] flex h-[22px] items-center pt-px font-['DejaVu_Sans',sans-serif] text-[#0c0c0c]">
          {range(-1, 21).map((n) => (
            <span key={n} className="flex-1 text-center">{n * 10}</span>
          ))}
        </div>
        <svg className="w-full flex-1" height="27" aria-hidden="true">
          <rect width="100%" height="100%" fill="#25313e" />
          <rect x={frameLeft(1)} width="86.54%" height="100%" fill="#36434f" />
          {range(-2, 43).map((n) => (
            <line key={n} x1={frameLeft(n * 5)} x2={frameLeft(n * 5)} y1="0" y2="100%" stroke={n > 0 && n < 40 ? "#5f6c76" : "#33404b"} />
          ))}
          <line x1={frameLeft(1)} x2={frameLeft(1)} y1="0" y2="100%" stroke="#000" />
          <line x1={frameLeft(200)} x2={frameLeft(200)} y1="0" y2="100%" stroke="#000" />
          <line x1={frameLeft(82)} x2={frameLeft(82)} y1="0" y2="100%" stroke="#a6b39b" strokeWidth="2" />
        </svg>
        <div className="absolute inset-x-2 bottom-[3px] flex h-[7px] items-center justify-between rounded-full bg-[#545454] px-px">
          <span className="size-[6px] rounded-full bg-[#1d1d1d]" />
          <span className="size-[6px] rounded-full bg-[#1d1d1d]" />
        </div>
        <div
          className="absolute top-[2px] flex h-[18px] w-6 -translate-x-1/2 items-center justify-center rounded-sm bg-[#87957f] font-['DejaVu_Sans',sans-serif] text-white"
          style={{ left: frameLeft(82) }}
        >
          82
        </div>
      </div>
    </section>
  );
}

/* ---------- outliner ---------- */

type OutlinerItem = {
  name: string;
  icon: ReactNode;
  data: ReactNode;
  wrench?: boolean;
  active?: boolean;
  hidden?: boolean;
  renderOff?: boolean;
};

const objects: OutlinerItem[] = [
  { name: "Camera", icon: <MovieIcon />, data: <CameraDataIcon />, hidden: true },
  { name: "Empty", icon: <EmptyIcon />, data: <CurveIcon /> },
  { name: "Icosphere", icon: <MeshObjectIcon />, data: <MeshDataIcon />, renderOff: true },
  { name: "Light", icon: <BulbIcon />, data: <LightDataIcon /> },
  { name: "Liquid Domain", icon: <MeshObjectIcon />, data: <MeshDataIcon />, wrench: true, active: true },
  { name: "Plane", icon: <MeshObjectIcon />, data: <MeshDataIcon />, wrench: true, renderOff: true },
  { name: "Plane.001", icon: <MeshObjectIcon />, data: <MeshDataIcon /> },
];

function RowToggles({ checkbox, hidden, renderOff }: { checkbox?: boolean; hidden?: boolean; renderOff?: boolean }) {
  return (
    <div className="ml-auto flex items-center text-[#ececec]">
      {checkbox && (
        <span className="relative mr-[3px] flex size-[14px]">
          <input type="checkbox" defaultChecked aria-label="Exclude collection" className="m-auto size-[11px] appearance-none bg-[#ececec]" />
          <Icon className="pointer-events-none absolute inset-0 size-[14px]"><path d="M4.500 8l2.500 3 4.500-6" stroke="#222" strokeWidth="1.700" /></Icon>
        </span>
      )}
      <button aria-label="Selectable" className="flex w-5 justify-center"><CursorIcon /></button>
      <button aria-label="Visible" className="flex w-5 justify-center">{hidden ? <ClosedEyeIcon /> : <EyeIcon />}</button>
      <button aria-label="Render" className="flex w-5 justify-center"><CameraIcon off={renderOff} /></button>
    </div>
  );
}

function Outliner() {
  return (
    <section className="flex h-[325px] shrink-0 flex-col overflow-hidden rounded-md bg-[#181818]">
      <div className="flex h-[25px] shrink-0 items-center bg-[#3a3a3a] pr-[6px] pb-px pl-2">
        <DropButton label="Editor type" className="w-8"><OutlinerIcon /></DropButton>
        <DropButton label="Display mode" className="ml-[6px] w-8"><LayersIcon /></DropButton>
        <SearchField label="Search outliner" className="ml-5 w-[110px]" />
        <DropButton label="Filter" className="ml-auto w-8"><FilterIcon /></DropButton>
        <button aria-label="New collection" className="ml-[5px] flex h-5 w-5 items-center justify-center rounded-sm border border-black bg-[#2a2a2a] text-[#b8b8b8]"><NewCollectionIcon /></button>
      </div>
      <ul className="relative pt-px text-[#6b9bc4]">
        <li className="flex h-5 items-center gap-1 pt-px pl-[22px]">
          <span className="text-[#cfcfcf]"><CollectionIcon /></span>
          <span className="pt-px pl-[2px]">シーンコレクション</span>
        </li>
        <li className="flex h-5 items-center bg-[#1e1e1e] pr-2 pl-[25px]">
          <Icon className="size-[9px]"><path d="M2 1h12L8 15z" fill="currentColor" stroke="none" /></Icon>
          <span className="mr-1 ml-[6px] flex size-5 items-center justify-center rounded bg-[#3c4a55] text-[#dcdcdc]"><CollectionIcon /></span>
          <span className="pt-[2px]">Collection</span>
          <RowToggles checkbox />
        </li>
        {objects.map((item, i) => (
          <li
            key={item.name}
            className={clsx("flex h-5 items-center pr-2 pl-[46px]", item.active ? "bg-[#3a5386]" : i % 2 ? "bg-[#1e1e1e]" : "bg-[#181818]")}
          >
            <Icon className="size-[9px]"><path d="M1 2v12l14-6z" fill="currentColor" stroke="none" /></Icon>
            <span className={clsx("ml-[5px] flex size-5 items-center justify-center rounded text-[#db8a4e]", item.active && "bg-[#4b6a9e]", item.hidden && "opacity-50")}>{item.icon}</span>
            <span className={clsx("ml-1 pt-[2px]", item.active && "text-[#f0a94c]", item.hidden && "text-[#37506a]")}>{item.name}</span>
            <span className="ml-[21px] flex">
              {item.wrench && <span className="flex size-5 items-center justify-center text-[#6f8fc9]"><WrenchIcon /></span>}
              <span
                className={clsx(
                  "flex size-5 items-center justify-center rounded",
                  item.hidden ? "bg-[#2c4846] text-[#4e8a6c]" : item.name === "Empty" ? "text-[#4e6d8c]" : "text-[#6ecb80]",
                )}
              >
                {item.data}
              </span>
            </span>
            <RowToggles hidden={item.hidden} renderOff={item.renderOff} />
          </li>
        ))}
        {range(0, 5).map((n) => (
          <li key={n} className={clsx("h-5", n % 2 ? "bg-[#181818]" : "bg-[#1e1e1e]")} />
        ))}
        <li className="absolute top-[46px] left-[29px] h-[130px] w-px bg-[#34465a]" aria-hidden="true" />
      </ul>
    </section>
  );
}

/* ---------- properties ---------- */

const tabGroups = [
  [{ label: "Tool", icon: <ToolIcon />, color: "text-[#c4c4c4]" }],
  [
    { label: "Render", icon: <RenderIcon />, color: "text-[#c4c4c4]" },
    { label: "Output", icon: <OutputIcon />, color: "text-[#c4c4c4]" },
    { label: "View Layer", icon: <LayersIcon />, color: "text-[#c4c4c4]" },
    { label: "Scene", icon: <SceneIcon />, color: "text-[#c4c4c4]" },
    { label: "World", icon: <WorldIcon />, color: "text-[#c9505c]" },
  ],
  [{ label: "Collection", icon: <ArchiveIcon />, color: "text-[#d8d8d8]" }],
  [
    { label: "Object", icon: <ObjectModeIcon />, color: "text-[#d08440]" },
    { label: "Modifiers", icon: <WrenchIcon solid />, color: "text-[#6a94d8]" },
    { label: "Particles", icon: <ParticlesIcon />, color: "text-[#6f86b8]" },
    { label: "Physics", icon: <PhysicsIcon />, color: "text-[#7fa6ec]" },
    { label: "Constraints", icon: <ConstraintIcon />, color: "text-[#7398cf]" },
    { label: "Data", icon: <MeshDataIcon />, color: "text-[#63c172]" },
    { label: "Material", icon: <MaterialIcon />, color: "text-[#d9525f]" },
  ],
];

const physicsButtons = [
  { label: "コリジョン", icon: <RigidIcon /> },
  { label: "クロス", icon: <ShirtIcon /> },
  { label: "ダイナミックペイント", icon: <PaintIcon /> },
  { label: "ソフトボディ", icon: <SoftBodyIcon /> },
  { label: "流体", icon: <CloseIcon className="size-[14px]" />, toggles: true },
  { label: "リジッドボディ", icon: <RigidIcon /> },
  { label: "リジッドボディコンストレイント", icon: <RigidConstraintIcon /> },
];

const Dot = ({ dim }: { dim?: boolean }) => (
  <span className={clsx("ml-2 size-1 rounded-full", dim ? "bg-[#777]" : "bg-[#e0e0e0]")} />
);

function SelectRow({ id, label, value }: { id: string; label: string; value: string }) {
  return (
    <div className="flex h-5 items-center">
      <label htmlFor={id} className="w-[94px] text-right">{label}</label>
      <div className={clsx("relative ml-[10px] flex h-[18px] flex-1 items-center justify-end rounded-sm text-white", blue)}>
        <select id={id} className="absolute inset-0 w-full appearance-none pl-2 outline-none">
          <option>{value}</option>
        </select>
        <Chevron />
      </div>
      <span className="w-[21px]" />
    </div>
  );
}

type FieldProps = { id: string; label?: string; value: string; dot?: boolean; dim?: boolean; left?: boolean; join?: string };

function FieldRow({ id, label, value, dot = true, dim, left, join = "rounded" }: FieldProps) {
  return (
    <div className="flex h-5 items-center">
      <label htmlFor={id} className={clsx("w-[94px] overflow-hidden whitespace-nowrap", left ? "text-left" : "text-right", dim && "opacity-60")}>
        {label}
      </label>
      <input
        id={id}
        aria-label={label ?? id}
        defaultValue={value}
        className={clsx(
          "ml-[9px] h-full min-w-0 flex-1 border border-[#0a0e12] bg-[#2b3944] text-center font-['DejaVu_Sans',sans-serif] text-[#9fc9e6] outline-none",
          join,
          dim && "opacity-50",
        )}
      />
      <span className="flex w-5 items-center">{dot && <Dot dim={dim} />}</span>
    </div>
  );
}

function CheckRow({ label }: { label: string }) {
  return (
    <div className="flex h-5 items-center">
      <label className="ml-[103px] flex flex-1 items-center gap-[3px] whitespace-nowrap text-[#e4e4e4]">
        <span className="relative flex size-[14px] shrink-0">
          <input type="checkbox" defaultChecked className="size-[14px] appearance-none rounded-sm bg-[#5b84ae]" />
          <Icon className="pointer-events-none absolute inset-0 size-[14px]"><path d="M3.500 8.500l3 3.500 6-8" stroke="#fff" strokeWidth="2" /></Icon>
        </span>
        {label}
      </label>
      <span className="flex w-5 items-center"><Dot /></span>
    </div>
  );
}

function Properties() {
  return (
    <section className="flex min-h-0 flex-1 flex-col overflow-hidden rounded-md bg-[#424242]">
      <div className="flex h-[25px] shrink-0 items-center bg-[#353535] pr-[5px] pb-px pl-2">
        <DropButton label="Editor type" className="w-8"><PropertiesIcon /></DropButton>
        <SearchField label="Search properties" className="ml-[69px] w-[110px]" />
        <DropButton label="Options" className="ml-auto w-5" />
      </div>
      <div className="flex min-h-0 flex-1">
        <div className="flex w-7 shrink-0 flex-col gap-[10px] bg-[#1f1f1f] pt-[9px] pl-[2px]">
          {tabGroups.map((group, g) => (
            <div key={g} className="flex flex-col gap-[2px]">
              {group.map((tab) => (
                <button
                  key={tab.label}
                  aria-label={tab.label}
                  className={clsx("flex h-[26px] items-center justify-center rounded-l", tab.label === "Physics" ? "bg-[#424242]" : "bg-[#2a2a2a]", tab.color)}
                >
                  {tab.icon}
                </button>
              ))}
            </div>
          ))}
        </div>
        <div className="min-w-0 flex-1 overflow-hidden pr-[6px] pl-2 text-[#b9bcbf]">
          <div className="-mt-[14px] flex flex-col gap-[2px] text-[#d4d4d4]">
            {physicsButtons.map((item) => (
              <div key={item.label} className="flex h-5 overflow-hidden rounded border border-black bg-[#2b3944]">
                <button className="flex flex-1 items-center pl-[3px]">
                  <span className="flex w-4 justify-center">{item.icon}</span>
                  <span className="flex-1 pt-px text-center">{item.label}</span>
                </button>
                {item.toggles && (
                  <>
                    <button aria-label="Show in viewport" className="flex w-5 items-center justify-center border-l border-black bg-[#5b84ae] text-white"><MonitorIcon /></button>
                    <button aria-label="Show in render" className="flex w-5 items-center justify-center border-l border-black bg-[#5b84ae] text-white"><CameraIcon /></button>
                  </>
                )}
              </div>
            ))}
          </div>

          <div className="mt-[10px] overflow-hidden rounded-t bg-[#28303a]">
            <h2 className="flex h-[25px] items-center gap-1 bg-[#1d1d1d] pt-px pr-1 pl-[6px] text-[#dcdcdc]">
              <Chevron className="size-3 opacity-70" />
              <span className="pl-px">流体</span>
              <Icon className="ml-auto size-3"><path d="M0 6h16M0 10h16" strokeWidth="1" strokeDasharray="1.400 2.800" opacity=".6" /></Icon>
            </h2>
            <div className="px-2 pt-2">
              <SelectRow id="type" label="タイプ" value="ドメイン" />
            </div>
            <h3 className="mt-2 flex h-[25px] items-center gap-1 pt-px pl-[20px] text-[#dcdcdc]">
              <Chevron className="size-3 opacity-70" />
              設定
            </h3>
            <div className="bg-[#212831] pt-2">
              <div className="flex flex-col gap-[2px] px-2">
                <SelectRow id="domain-type" label="ドメインタイプ" value="液体" />
                <div className="mt-[3px] flex flex-col gap-[2px]">
                  <FieldRow id="resolution" label="分割の解像度" value="96" dot={false} />
                  <FieldRow id="time-scale" label="タイムスケール" value="0.500" />
                  <FieldRow id="cfl" label="CFL数" value="4.000" />
                  <CheckRow label="適応タイムステップを..." />
                  <div>
                    <FieldRow id="steps-max" label="最大タイムステッ" value="4" left join="rounded-t" />
                    <FieldRow id="steps-min" label="最小" value="1" join="rounded-b border-t-0" />
                  </div>
                </div>
                <div className="mt-2">
                  <FieldRow id="gravity-x" label="シーンの重力を使" value="0 m/s²" left dim join="rounded-t" />
                  <FieldRow id="gravity-y" value="0 m/s²" dim join="border-t-0" />
                  <FieldRow id="gravity-z" value="-9.81 m/s²" dim join="rounded-b border-t-0" />
                </div>
                <div className="flex h-5 items-center justify-end">
                  <span className="flex w-5"><Dot /></span>
                </div>
                <button aria-label="Delete in obstacle" className="mt-[11px] h-5 rounded border border-[#0a0e12] bg-[#2b3944]" />
              </div>
              <h3 className="mt-[9px] flex h-6 items-center gap-1 pt-px pl-[20px] text-[#dcdcdc]">
                <Chevron className="size-3 opacity-70" />
                ボーダーコリジョン
              </h3>
              <div className="bg-[#1c232b] px-2 pt-2 pb-6">
                {["前", "後", "右", "左", "上"].map((side) => (
                  <CheckRow key={side} label={side} />
                ))}
              </div>
            </div>
          </div>
        </div>
      </div>
    </section>
  );
}

/* ---------- callout ---------- */

function Callout() {
  return (
    <>
      <div className="pointer-events-none absolute top-[678px] right-16 h-12 w-[220px] rounded-xs border-[6px] border-[#ff8c2a]" />
      <div className="pointer-events-none absolute top-[832px] right-[78px] flex h-[90px] w-[425px] items-center justify-center rounded-[30px] border-[6px] border-[#ff8c2a] bg-white pr-1 pb-2 font-['Noto_Sans_CJK_JP',sans-serif] text-[37px] font-bold text-black">
        <svg viewBox="0 0 100 108" className="absolute -top-[104px] left-[214px] h-[108px] w-[100px] overflow-visible" aria-hidden="true">
          <path d="M7 106L89 3L47 106z" fill="#fff" />
          <path d="M7 101L89 3L47 101" fill="none" stroke="#ff8c2a" strokeWidth="6" strokeLinejoin="round" />
        </svg>
        タイムスケール：0.5
      </div>
    </>
  );
}

function StatusBar() {
  return (
    <footer className="flex h-5 shrink-0 items-center bg-[#333333] pt-px pr-[9px] pl-2 text-[#a8a8a8]">
      <span className="flex w-[211px] items-center gap-[10px]"><MouseIcon side="left" />選択</span>
      <span className="flex w-[213px] items-center gap-[10px]"><MouseIcon side="middle" />ビューを回転</span>
      <span className="flex items-center gap-[9px]"><MouseIcon side="right" />オブジェクトコンテクストメニュー</span>
      <span className="ml-auto">Collection | Liquid Domain | 頂点:388 | 面:333 | 三角面:646 | オブジェクト:1/6 | 3.3.0</span>
    </footer>
  );
}

export default function App() {
  return (
    <div className="relative flex h-screen min-h-[700px] flex-col overflow-hidden bg-[#1f1f1f] font-['DejaVu_Sans_Condensed','Noto_Sans','Noto_Sans_CJK_JP',sans-serif] text-[11px] leading-4 whitespace-nowrap">
      <TitleBar />
      <TopBar />
      <main className="flex min-h-0 flex-1 gap-[3px] px-[2px] pb-px">
        <div className="flex min-w-0 flex-1 flex-col gap-[3px]">
          <Viewport />
          <Timeline />
        </div>
        <aside className="flex w-[324px] shrink-0 flex-col gap-[2px]">
          <Outliner />
          <Properties />
        </aside>
      </main>
      <StatusBar />
      <Callout />
    </div>
  );
}
